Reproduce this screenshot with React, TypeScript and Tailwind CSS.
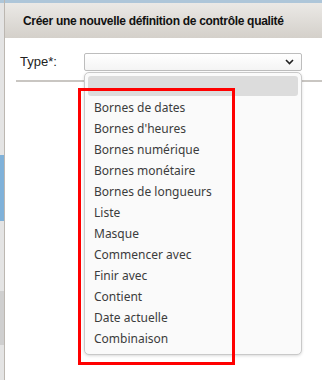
import React from "react";

const options = [
  "Bornes de dates",
  "Bornes d'heures",
  "Bornes numérique",
  "Bornes monétaire",
  "Bornes de longueurs",
  "Liste",
  "Masque",
  "Commencer avec",
  "Finir avec",
  "Contient",
  "Date actuelle",
  "Combinaison",
];

function Chevron() {
  return (
    <svg width="9" height="6" viewBox="0 0 9 6" className="block">
      <path d="M1 1l3.5 3.5L8 1" fill="none" stroke="#222" strokeWidth="1.6" />
    </svg>
  );
}

export default function App() {
  return (
    <div className="relative w-[322px] h-[380px] overflow-hidden bg-white flex font-['Liberation_Sans',Arial,sans-serif]">
      {/* page behind the dialog */}
      <div aria-hidden className="w-[4px] flex flex-col bg-[#e4e4e4]">
        <div className="h-[3px] bg-[#aec6d9]" />
        <div className="h-[152px]" />
        <div className="h-[66px] bg-[#7fb1d9]" />
        <div className="h-[70px]" />
        <div className="h-[54px] bg-[#cfcfcf]" />
      </div>

      <div className="flex-1 flex flex-col border-l border-[#bcb7b1]">
        <div className="h-[3px] bg-[#aec6d9]" />
        <div className="h-[35px] flex items-center pl-[18px] bg-gradient-to-b from-[#ebe9e6] to-[#d4d0ca]">
          <h1 className="text-[12px] tracking-[-0.3px] font-bold text-[#111] whitespace-nowrap">
            Créer une nouvelle définition de contrôle qualité
          </h1>
        </div>

        <div className="flex-1 bg-white pt-[15px]">
          <div className="flex items-center h-[18px]">
            <span className="ml-[15px] w-[64px] text-[13px] text-[#222]">Type*:</span>
            <div className="w-[218px] h-[18px] border border-[#bdbdbd] rounded-[2px] bg-gradient-to-b from-white to-[#f4f4f4] flex items-center justify-end pr-[7px]">
              <Chevron />
            </div>
          </div>
          <div className="mt-[9px] ml-[11px] h-[2px] bg-[#c9c6c2]" />
        </div>
      </div>

      {/* open select list */}
      <div className="absolute left-[84px] top-[72px] w-[218px] h-[283px] rounded-[5px] border border-[#c9c9c9] bg-[#fafafa] shadow-[0_1px_3px_rgba(0,0,0,0.15)] p-[3px] font-['Noto_Sans',sans-serif]">
        <div className="h-[20px] rounded-[3px] bg-[#dcdcdc]" />
        <ul className="mt-[1px]">
          {options.map((o) => (
            <li key={o} className="h-[21px] flex items-center pl-[6px] text-[12px] text-[#3c3c3c]">
              {o}
            </li>
          ))}
        </ul>
      </div>

      {/* annotation */}
      <div aria-hidden className="absolute left-[78px] top-[88px] w-[157px] h-[277px] border-[3px] border-[#ff0000]" />
    </div>
  );
}
